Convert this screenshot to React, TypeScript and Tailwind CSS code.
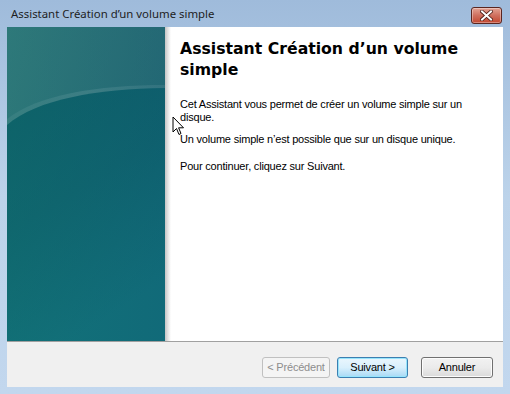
import React from "react";

function LeftPanel() {
  return (
    <svg width="158" height="314" viewBox="0 0 158 314" className="block">
      <defs>
        <linearGradient id="topg" x1="0" y1="0" x2="1" y2="0.6">
          <stop offset="0" stopColor="#3d7b7b" />
          <stop offset="1" stopColor="#2a6970" />
        </linearGradient>
        <linearGradient id="botg" x1="0" y1="0" x2="0.4" y2="1">
          <stop offset="0" stopColor="#0b5860" />
          <stop offset="0.5" stopColor="#0e6069" />
          <stop offset="1" stopColor="#127079" />
        </linearGradient>
        <linearGradient id="botr" x1="0" y1="0" x2="1" y2="0">
          <stop offset="0" stopColor="#127577" stopOpacity="0.35" />
          <stop offset="1" stopColor="#0f5f78" stopOpacity="0.35" />
        </linearGradient>
        <linearGradient id="band" x1="0" y1="0" x2="1" y2="0">
          <stop offset="0" stopColor="#ffffff" stopOpacity="0.05" />
          <stop offset="0.5" stopColor="#ffffff" stopOpacity="0.12" />
          <stop offset="1" stopColor="#ffffff" stopOpacity="0.08" />
        </linearGradient>
      </defs>
      <rect x="0" y="0" width="158" height="314" fill="url(#topg)" />
      <path d="M0 92 C 30 68, 90 58, 158 58 L158 314 L0 314 Z" fill="url(#band)" />
      <path d="M0 92 C 30 68, 90 58, 158 58 L158 314 L0 314 Z" fill="#ffffff" fillOpacity="0.04" />
      <path d="M0 98 C 30 72, 90 62, 158 61 L158 314 L0 314 Z" fill="url(#botg)" />
      <rect x="0" y="0" width="158" height="314" fill="url(#botr)" />
    </svg>
  );
}

function CloseButton() {
  return (
    <div className="w-[31px] h-[17px] rounded-[3px] border border-[#5a2620] bg-gradient-to-b from-[#e3a395] via-[#cf6f5e] to-[#c2462f] flex items-center justify-center shadow-[inset_0_0_0_1px_rgba(255,255,255,0.35)]">
      <svg width="13" height="11" viewBox="0 0 13 11">
        <path d="M2 1.5 L11 9.5 M11 1.5 L2 9.5" stroke="#4a1a14" strokeWidth="3.6" strokeLinecap="square" />
        <path d="M2 1.5 L11 9.5 M11 1.5 L2 9.5" stroke="#ffffff" strokeWidth="2" strokeLinecap="square" />
      </svg>
    </div>
  );
}

function Cursor() {
  return (
    <svg width="14" height="21" viewBox="0 0 14 21" className="absolute left-[172px] top-[116px]">
      <path d="M1 1 L1 16 L4.5 12.5 L7 18.5 L9 17.5 L6.6 11.8 L11.5 11.8 Z" fill="#ffffff" stroke="#000000" strokeWidth="1" strokeLinejoin="round" />
    </svg>
  );
}

export default function App() {
  const btn = "h-[21px] rounded-[3px] flex items-center justify-center text-[11px] tracking-[-0.2px]";
  return (
    <div
      className="relative w-[510px] h-[394px] bg-gradient-to-b from-[#9fbbdb] via-[#bcd3ea] to-[#c2d7ee] flex flex-col overflow-hidden"
      style={{ fontFamily: '"Liberation Sans", Arial, sans-serif' }}
    >
      <div className="h-[27px] flex items-start justify-between pl-[11px] pr-[8px]">
        <div
          className="pt-[6px] text-[11.4px] text-[#1e1e1e] leading-[15px]"
          style={{ fontFamily: '"Noto Sans", "Open Sans", sans-serif' }}
        >
          Assistant Création d’un volume simple
        </div>
        <div className="pt-[7px]">
          <CloseButton />
        </div>
      </div>
      <div className="flex-1 px-[7px] pb-[7px] flex flex-col">
        <div className="flex-1 flex flex-col bg-white">
          <div className="h-[314px] flex">
            <LeftPanel />
            <div className="w-[6px] bg-gradient-to-r from-[#c4c4c4] via-[#e4e4e4] to-white" />
            <div className="flex-1 pl-[9px] pt-[11px] pr-[10px]">
              <div
                className="text-[15.7px] font-bold leading-[21px] text-black"
                style={{ fontFamily: '"DejaVu Sans", Verdana, sans-serif' }}
              >
                Assistant Création d’un volume
                <br />
                simple
              </div>
              <div className="mt-[18px] text-[11px] leading-[13px] tracking-[-0.2px] text-black">
                <p>Cet Assistant vous permet de créer un volume simple sur un disque.</p>
                <p className="mt-[9px]">Un volume simple n’est possible que sur un disque unique.</p>
                <p className="mt-[14px]">Pour continuer, cliquez sur Suivant.</p>
              </div>
            </div>
          </div>
          <div className="h-px bg-[#a0a0a0]" />
          <div className="flex-1 bg-[#f0f0f0] flex items-start justify-end pt-[15px] pr-[10px]">
            <div className={`${btn} w-[68px] border border-[#c0c0c0] bg-[#f4f4f4] text-[#8d8d8d]`}>
              &lt; Précédent
            </div>
            <div
              className={`${btn} ml-[7px] w-[71px] border border-[#3c7fb1] bg-gradient-to-b from-[#eaf6fd] via-[#d9f0fc] to-[#a7d9f5] text-black shadow-[inset_0_0_0_1px_#97e5fc]`}
            >
              Suivant &gt;
            </div>
            <div
              className={`${btn} ml-[13px] w-[72px] border border-[#707070] bg-gradient-to-b from-[#f2f2f2] via-[#ebebeb] to-[#dadada] text-black shadow-[inset_0_0_0_1px_#fcfcfc]`}
            >
              Annuler
            </div>
          </div>
        </div>
      </div>
      <Cursor />
    </div>
  );
}
